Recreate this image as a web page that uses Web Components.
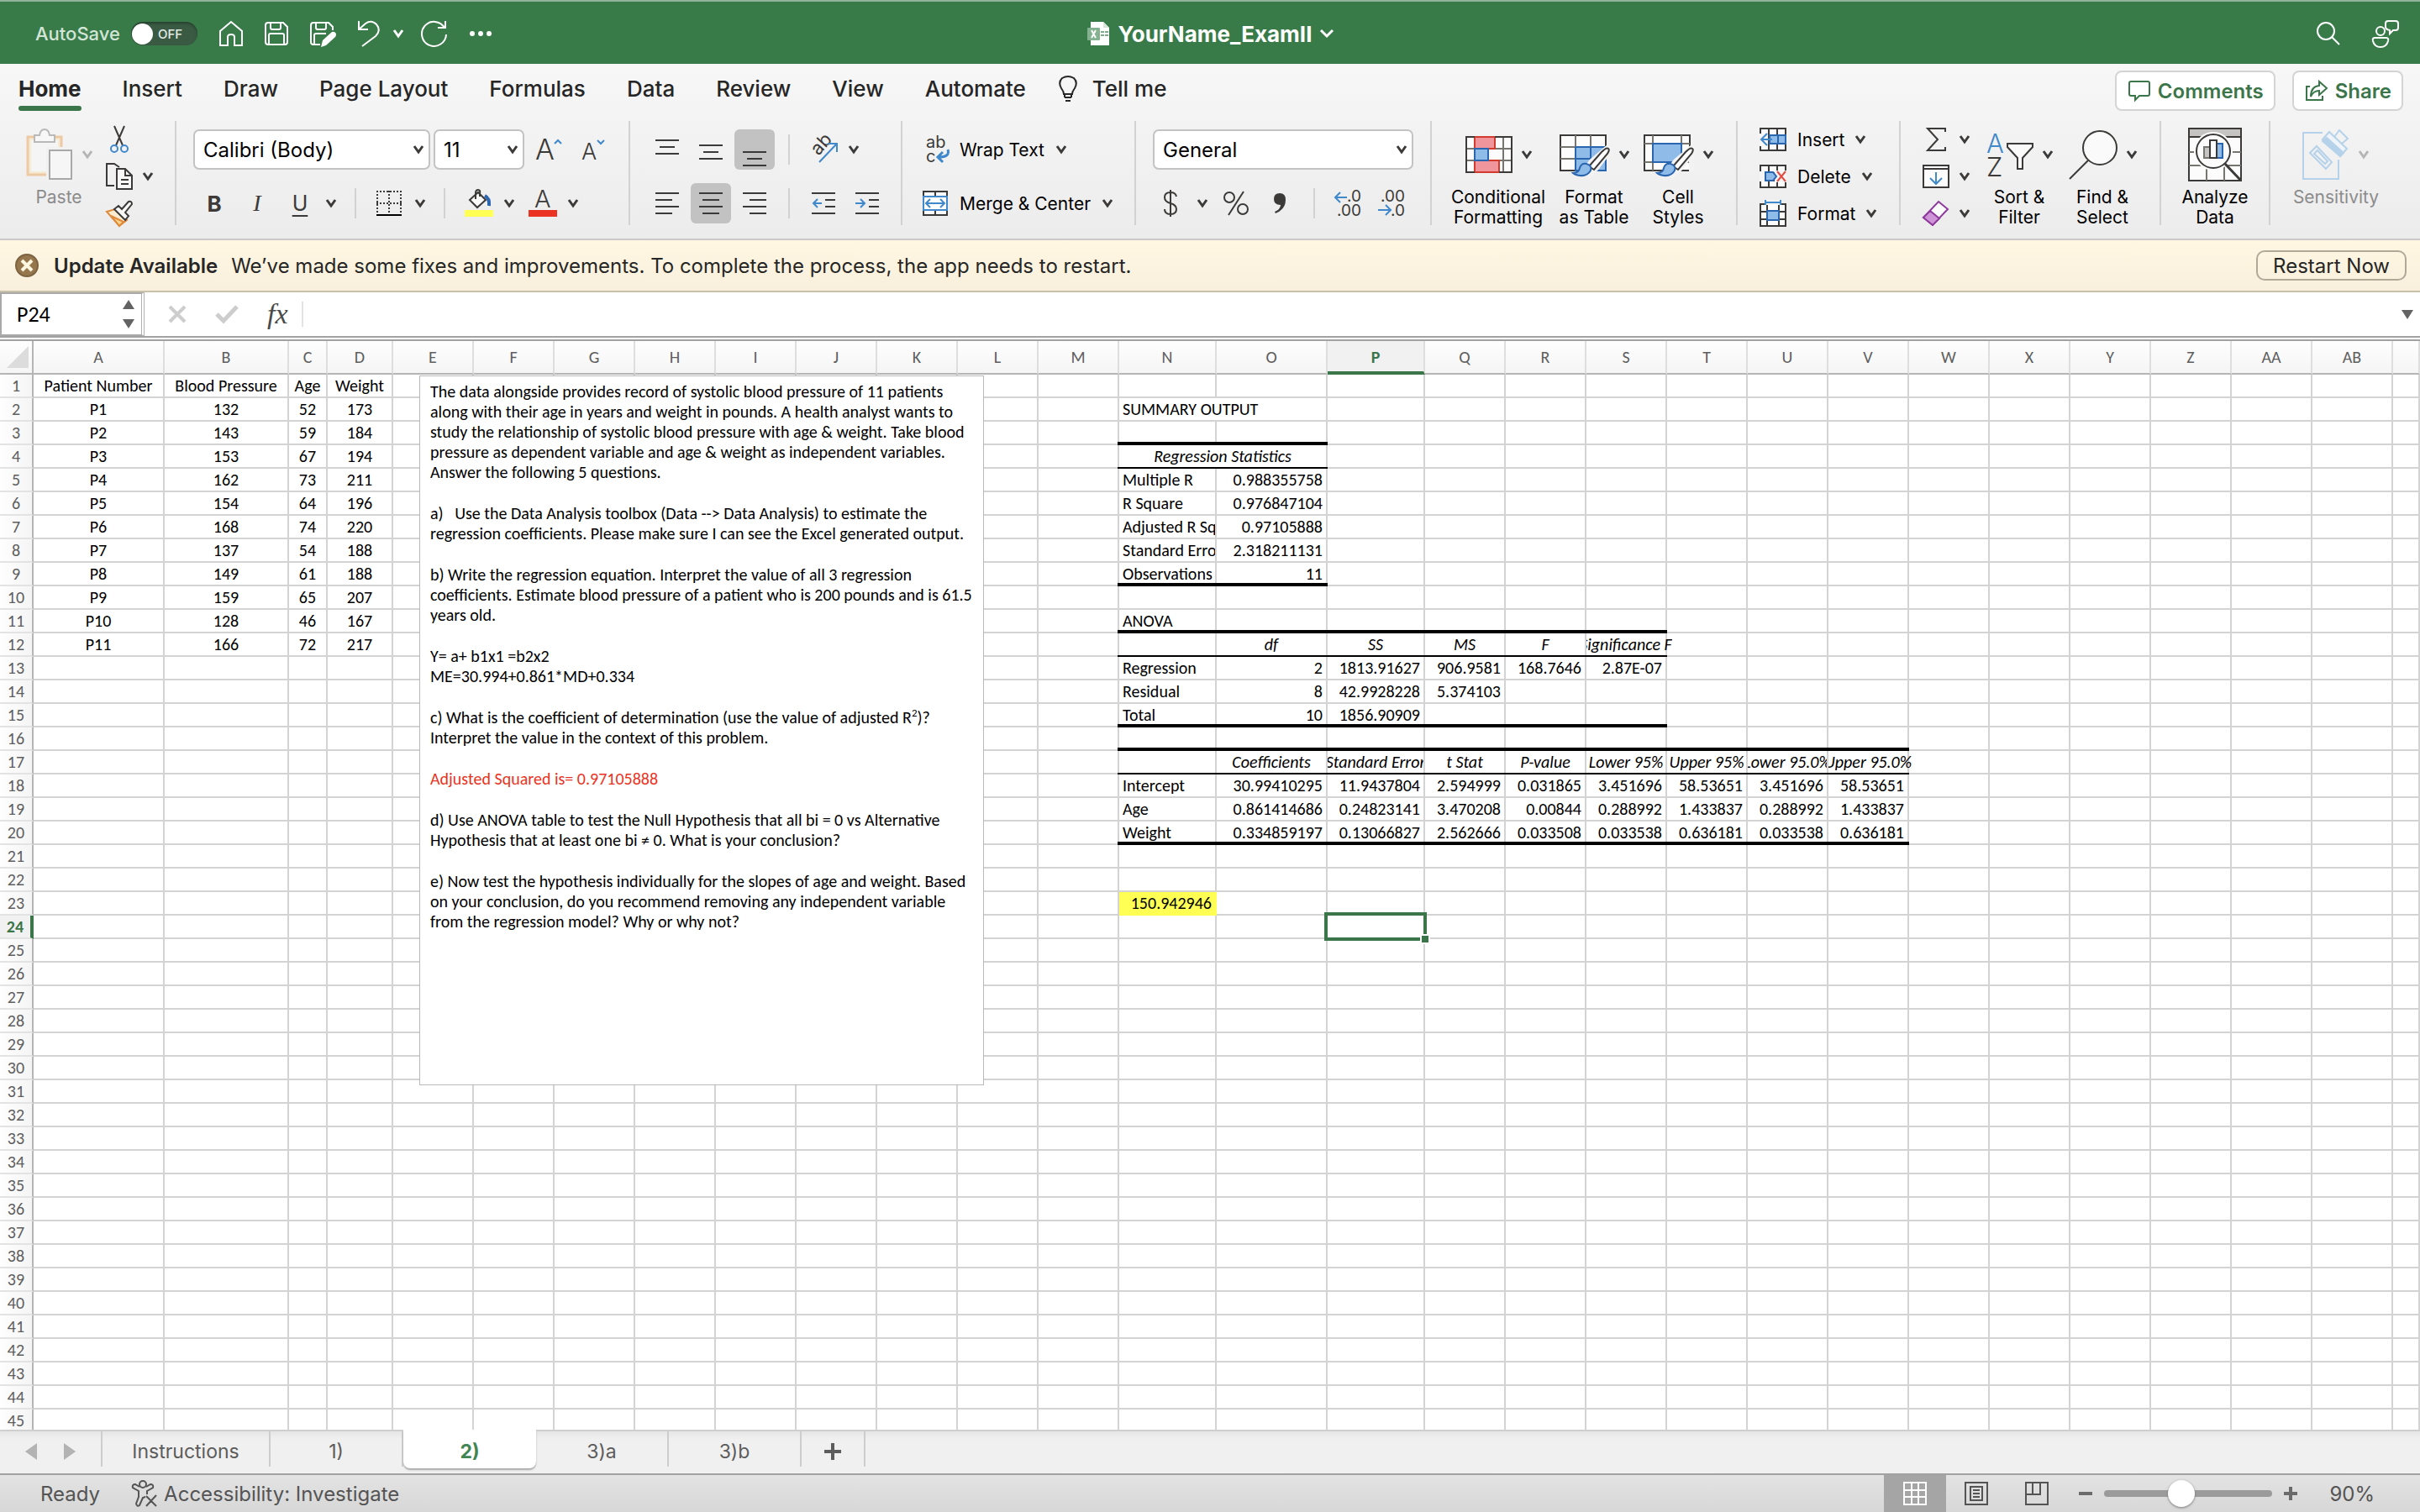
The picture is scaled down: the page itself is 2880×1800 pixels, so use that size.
<!DOCTYPE html>
<html lang="en">
<head>
<meta charset="utf-8">
<title>YourName_ExamII</title>
<style>
  html, body { height: 100%; margin: 0; }
  body { font-family: Inter, "Liberation Sans", sans-serif; font-size: 21px; color: #262626; background: #fff; overflow: hidden; }
  excel-app { --green: #387b49; --accent: #3b754a; --dark: #3b3a38; --blue: #3f88cb; --cell-font: Calibri, Carlito, Lato, sans-serif; }
</style>
</head>
<body>
<excel-app></excel-app>

<script>
// name: [width, height, markup]
const GRID = '<path d="M1 1H31V27H1ZM1 10H31M1 19H31M11 1V27M21 1V27" fill="#fbfbfb"/>';
const BRUSH = `<path d="M57 20Q60 20 59 24L44 44L35 53L30 47L38 36Z" fill="#f3f3f3" stroke="#f3f3f3" stroke-width="6"/>
  <path d="M58 21Q60 22 57 27L41 46L35 42L50 25Q56 19 58 21Z" fill="#fff"/>
  <path d="M16 50Q23 50 24 44Q26 38 32 39Q39 41 37 47Q33 54 24 53Q18 52 16 50Z" fill="#8fbbe8" stroke="#2a65b0"/>`;
const ICONS = {
  chev: [12, 10, '<path d="M1 1L6 8L11 1" stroke-width="3"/>'],
  chevWide: [16, 10, '<path d="M1 1L8 8L15 1" stroke-width="3"/>'],
  home: [28, 30, '<path d="M1 12L14 1L27 12V29H18V19Q18 16 14 16T10 19V29H1Z"/>'],
  save: [28, 28, '<path d="M4 1H22L27 6V24Q27 27 24 27H4Q1 27 1 24V4Q1 1 4 1ZM7 1V7Q7 9 9 9H17Q19 9 19 7V1M5 27V16Q5 14 7 14H21Q23 14 23 16V27"/>'],
  saveEdit: [30, 28, '<path d="M12 27H4Q1 27 1 24V4Q1 1 4 1H22L27 6V10M7 1V7Q7 9 9 9H17Q19 9 19 7V1M5 27V16Q5 14 7 14H19"/><path d="M13 30L15 22L26 12Q29 11 31 14Q31 17 30 18L19 28Z" fill="currentColor" stroke="none"/>'],
  undo: [27, 32, '<path d="M2 1V11H13M2 11L10 4Q17 -1 23 5Q29 12 22 19L6 31"/>'],
  redo: [32, 32, '<path d="M30 1V9H21M29 9A14.500 14.500 0 1 0 31 17"/>'],
  more: [28, 8, '<g fill="currentColor" stroke="none"><circle cx="4" cy="4" r="3"/><circle cx="14" cy="4" r="3"/><circle cx="24" cy="4" r="3"/></g>'],
  xlsDoc: [28, 30, '<path d="M5 1H20L27 8V29H5Z" fill="#fff" stroke="none"/><path d="M20 1V8H27Z" fill="#d8e5db" stroke="none"/><path d="M17 12h4v2h-4zm5 0h4v2h-4zm-5 4h4v2h-4zm5 0h4v2h-4z" fill="#7fa98a" stroke="none"/><rect x="1" y="8" width="15" height="15" rx="1" fill="#84b291" stroke="none"/><path d="M6 11L11 20M11 11L6 20" stroke="#fff"/>'],
  search: [30, 30, '<circle cx="12" cy="12" r="10"/><path d="M19 19L28 28"/>'],
  person: [34, 34, '<circle cx="11" cy="14" r="5"/><path d="M4 22H18Q21 22 20 26Q18 33 11 33T2 26Q1 22 4 22ZM20 2H29Q32 2 32 5V10Q32 13 29 13H26L22 17V13Q17 12 17 9V5Q17 2 20 2Z"/>'],
  bulb: [22, 31, '<path d="M6 22Q6 19 3 15Q-1 8 4 3Q11 -1 18 3Q23 8 19 15Q16 19 16 22ZM7 26H15M7 22V26M15 22V26M8 30H14"/>'],
  comment: [26, 26, '<path d="M3 2H23Q25 2 25 4V17Q25 19 23 19H13L8 24V19H3Q1 19 1 17V4Q1 2 3 2Z"/>'],
  share: [26, 26, '<path d="M1 8V24H20V19M1 16V8H5"/><path d="M16 2L25 10L16 18V13Q9 13 6 20Q6 8 16 7Z"/>'],
  paste: [56, 62, '<path d="M2 10H42V55H2Z" fill="#f5ead3" stroke="#edcaa3" stroke-width="3"/><path d="M6 14H38V51H6Z" fill="#f5f5f5" stroke="none"/><path d="M10 16V8H16Q17 1 22 1T28 8H34V16Z" fill="#f7f7f7" stroke="#b9b9b9" stroke-width="2"/><path d="M26 24H55V61H26Z" fill="#f3f3f3" stroke="#f1f1f1" stroke-width="4"/><path d="M28 26H54V60H28Z" fill="#f6f6f6" stroke="#a9a9a9" stroke-width="2"/>'],
  cut: [22, 34, '<path d="M5 1L15 24M17 1L7 24"/><circle cx="5" cy="28" r="4" stroke="#3f88cb"/><circle cx="17" cy="28" r="4" stroke="#3f88cb"/>'],
  copy: [32, 34, '<path d="M10 28H1V2H10L16 6"/><path d="M13 8H23L31 16V32H13Z" fill="#f7f7f7"/><path d="M23 8V16H31M18 21H27M18 26H27"/>'],
  painter: [32, 32, '<path d="M1 14L11 11L25 24L16 31Z" fill="#fcebcf" stroke="#e08a3c"/><path d="M6 19L21 26L16 31Z" fill="#f9d48a" stroke="#e08a3c"/><path d="M10 11L15 7L19 11L27 2Q31 1 31 5L23 15L27 19L23 24Z" fill="#f7f7f7"/>'],
  fontUp: [32, 30, '<text x="0" y="27" font-size="34" font-weight="300">A</text><path d="M23 8L27 4L31 8" stroke="#3f88cb"/>'],
  fontDown: [28, 30, '<text x="0" y="27" font-size="27" font-weight="300">A</text><path d="M19 4L23 8L27 4" stroke="#3f88cb"/>'],
  borders: [30, 30, '<path d="M0 1H30M0 15H30M1 0V27M15 0V27M29 0V27" stroke-dasharray="2 2"/><path d="M0 29H30" stroke="#000"/>'],
  fill: [34, 34, '<path d="M6 13L16 4L25 13L15 22Z M13 12V5Q13 1 16 1T18 5V9" fill="#fafafa"/><path d="M24 8Q30 11 29 20" stroke="#2a65b0" stroke-width="4"/><path d="M0 25H34V33H0Z" fill="#ffff54" stroke="none"/>'],
  fontColor: [34, 34, '<text x="7" y="22" font-size="29" font-weight="300">A</text><path d="M0 25H34V33H0Z" fill="#ea3323" stroke="none"/>'],
  vTop: [28, 36, '<path d="M0 7H28M5 15H23M0 23H28"/>'],
  vMid: [28, 36, '<path d="M0 13H28M5 21H23M0 29H28"/>'],
  vBottom: [28, 36, '<path d="M0 21H28M5 29H23M0 37H28"/>'],
  hLeft: [28, 28, '<path d="M0 2H28M0 10H20M0 18H28M0 26H20"/>'],
  hCenter: [28, 28, '<path d="M0 2H28M4 10H24M0 18H28M4 26H24"/>'],
  hRight: [28, 28, '<path d="M0 2H28M8 10H28M0 18H28M8 26H28"/>'],
  orient: [34, 34, '<text x="0" y="0" font-size="22" transform="translate(11 25) rotate(-48)">ab</text><path d="M12 32L32 11M22 10H33V20" stroke="#3f88cb"/>'],
  outdent: [28, 28, '<path d="M0 2H28M16 10H28M16 18H28M0 26H28"/><path d="M12 14H2M7 9L2 14L7 19" stroke="#3f88cb"/>'],
  indent: [28, 28, '<path d="M0 2H28M16 10H28M16 18H28M0 26H28"/><path d="M0 14H11M6 9L11 14L6 19" stroke="#3f88cb"/>'],
  wrap: [30, 34, '<text x="4" y="15" font-size="20">ab</text><text x="4" y="32" font-size="20">c</text><path d="M30 17Q33 26 19 26M24 20L18 26L24 32" stroke="#3f88cb" stroke-width="3"/>'],
  merge: [30, 32, '<path d="M1 2H29V30H1ZM15 2V8M15 24V30" fill="#fafafa"/><path d="M1 8H29V24H1Z" fill="#fff" stroke="#3f88cb"/><path d="M5 16H25M9 11L4 16L9 21M21 11L26 16L21 21" stroke="#3f88cb"/>'],
  dollar: [18, 34, '<path d="M9 1V33M16 9Q15 4 9 4Q2 4 2 10Q2 15 9 17Q16 19 16 24Q16 30 9 30Q2 30 2 24"/>'],
  percent: [30, 30, '<circle cx="7" cy="8" r="6"/><circle cx="23" cy="22" r="6"/><path d="M24 1L6 29"/>'],
  comma: [16, 26, '<path d="M8 1Q15 1 15 9Q15 20 3 25L2 23Q9 20 9 15Q1 15 1 8Q1 1 8 1Z" fill="currentColor" stroke="none"/>'],
  decInc: [32, 34, '<text x="32" y="15" font-size="19" text-anchor="end">.0</text><text x="32" y="32" font-size="19" text-anchor="end">.00</text><path d="M15 10H1M7 4L1 10L7 16" stroke="#3f88cb"/>'],
  decDec: [32, 34, '<text x="32" y="15" font-size="19" text-anchor="end">.00</text><text x="32" y="32" font-size="19" text-anchor="end">.0</text><path d="M0 25H15M9 19L15 25L9 31" stroke="#3f88cb"/>'],
  condFmt: [56, 46, '<path d="M1 2H55V44H1Z" fill="#fcfcfc"/><path d="M1 16H55M1 30H55M45 2V44M11 2V44" stroke="#77756f"/><path d="M11 2H35V16H11ZM11 30H40V44H11Z" fill="#f0959b" stroke="#d23a2e"/><path d="M11 16H27V30H11Z" fill="#8fbbe8" stroke="#2a65b0"/><path d="M1 2H11M1 2V44H11M35 2H55V44H40"/>'],
  fmtTable: [60, 56, '<path d="M1 5H55V47H1Z" fill="#fcfcfc"/><path d="M19 19H55V47H19Z" fill="#8fbbe8" stroke="none"/><path d="M1 19H19M1 33H19M19 5V19M37 5V19" stroke="#77756f"/><path d="M19 19H55M19 19V47H55V33M19 33H50M37 19V38" stroke="#2a65b0"/>' + BRUSH],
  cellStyles: [60, 56, '<path d="M1 5H55V47H1Z" fill="#fcfcfc"/><path d="M1 15H55M1 37H55M11 5V47M45 5V47" stroke="#77756f"/><path d="M11 15H45V37H11Z" fill="#8fbbe8" stroke="#2a65b0"/><path d="M54 20H60V48H54Z" fill="#f3f3f3" stroke="none"/>' + BRUSH],
  cellInsert: [32, 28, GRID + '<path d="M12 9H31V19H12Z" fill="#8fbbe8" stroke="#2a65b0"/><path d="M22 9V19" stroke="#2a65b0"/><path d="M0 7H10V22H0Z" fill="#f6f6f6" stroke="none"/><path d="M15 14H2M9 7L2 14L9 21" stroke="#3f88cb"/>'],
  cellDelete: [32, 28, GRID + '<path d="M0 8H6V20H0ZM18 7H32V21H18Z" fill="#f6f6f6" stroke="none"/><path d="M7 9H16L20 14L16 19H7Z" fill="#8fbbe8" stroke="#2a65b0"/><path d="M21 8L31 20M31 8L21 20" stroke="#e2493f"/>'],
  cellFormat: [32, 32, '<path d="M1 5H31V31H1ZM1 14H31M1 23H31M9 5V31M23 5V31" fill="#fbfbfb"/><path d="M9 13H23V24H9Z" fill="#8fbbe8" stroke="#2a65b0"/><path d="M6 0H26V6H6Z" fill="#f3f3f3" stroke="none"/><path d="M7 0V6M25 0V6M7 3H25" stroke="#3f88cb"/>'],
  sum: [24, 28, '<path d="M23 5V1H2L14 14L2 27H23V23"/>'],
  fillDown: [32, 28, '<path d="M1 1H31V27H1ZM1 5H31" fill="#fcfcfc"/><path d="M16 9V22M9 16L16 23L23 16" stroke="#3f88cb"/>'],
  eraser: [32, 32, '<path d="M19 2L30 11L12 30L1 21Z" fill="#fbfbfb" stroke="#8e3a9c"/><path d="M9 13L20 22L12 30L1 21Z" fill="#cf94d8" stroke="#8e3a9c"/>'],
  sortFilter: [56, 54, '<text x="0" y="25" font-size="31" font-weight="300" style="fill:#3f88cb">A</text><text x="0" y="53" font-size="31" font-weight="300">Z</text><path d="M25 14H55V18L43 31V44H37V31L25 18Z" fill="#fafafa"/>'],
  find: [58, 60, '<circle cx="37" cy="22" r="20" fill="#fafafa"/><path d="M23 37L1 59"/>'],
  analyze: [64, 64, '<path d="M1 1H63V63H1Z" fill="#fcfcfc"/><path d="M1 1H63V11H1Z" fill="#c5c4c2"/><path d="M1 29H63M1 45H63M22 45V63M43 45V63" stroke="#77756f"/><circle cx="30" cy="28" r="20" stroke="#fcfcfc" stroke-width="6"/><circle cx="30" cy="28" r="20" fill="#fcfcfc"/><path d="M19 23H26V36H19Z" fill="#c5c4c2" stroke="#77756f"/><path d="M34 19H41V36H34Z" fill="#8fbbe8" stroke="#2a65b0"/><path d="M26 15H34V36H26Z" fill="#fff"/><path d="M44 43L62 62" stroke-width="3"/>'],
  sensitivity: [56, 60, '<g stroke="#b5d2ea" fill="none"><path d="M24 4H1V59H43V36"/><path d="M9 28L17 20L35 39L28 47Z"/><path d="M14 29L18 25L30 38L27 41Z"/><path d="M24 12L32 3L53 23L45 32Z" fill="#eef4f9"/><path d="M24 14L29 10L49 28L45 32Z" fill="#b5d2ea"/><path d="M38 9L44 1L54 11L47 17"/></g>'],
  close: [28, 28, '<circle cx="14" cy="14" r="13" fill="#95764d" stroke="#7c6341"/><path d="M8 8L20 20M20 8L8 20" stroke="#fff8e0" stroke-width="4"/>'],
  cancel: [24, 24, '<path d="M3 3L21 21M21 3L3 21" stroke-width="4"/>'],
  confirm: [28, 24, '<path d="M2 12L10 20L26 3" stroke-width="5"/>'],
  triUp: [14, 11, '<path d="M7 0L14 11H0Z" fill="currentColor" stroke="none"/>'],
  triDown: [14, 11, '<path d="M7 11L14 0H0Z" fill="currentColor" stroke="none"/>'],
  triLeft: [14, 20, '<path d="M0 10L14 0V20Z" fill="currentColor" stroke="none"/>'],
  triRight: [14, 20, '<path d="M14 10L0 0V20Z" fill="currentColor" stroke="none"/>'],
  plus: [20, 20, '<path d="M10 0V20M0 10H20" stroke-width="4"/>'],
  zoomPlus: [16, 16, '<path d="M8 0V16M0 8H16" stroke-width="4"/>'],
  zoomMinus: [16, 16, '<path d="M0 8H16" stroke-width="4"/>'],
  access: [30, 32, '<circle cx="13" cy="5" r="4"/><path d="M9 8L4 5Q0 5 1 9L8 13V20L5 28Q6 32 9 30L13 21L16 20M17 8L22 5Q26 5 25 9L18 13V17M17 19L29 31M29 18L17 31"/>'],
  viewNormal: [28, 28, '<path d="M1 1H27V27H1ZM1 10H27M1 18H27M10 1V27M18 1V27" stroke-width="2"/>'],
  viewPage: [28, 28, '<path d="M1 1H27V27H1ZM7 6H21V22H7ZM10 10H18M10 14H18M10 18H18"/>'],
  viewBreak: [28, 28, '<path d="M1 1H27V27H1ZM9 1V15M18 1V15H1"/>']
};

class XIcon extends HTMLElement {
  connectedCallback() {
    const [w, h, body] = ICONS[this.getAttribute('name')];
    this.attachShadow({ mode: 'open' });
    this.shadowRoot.innerHTML = `
      <style>
        :host { display: inline-flex; flex: none; }
        svg { display: block; overflow: visible; fill: none; stroke: currentColor; stroke-width: 2; }
        text { fill: currentColor; stroke: none; }
      </style>
      <svg width="${w}" height="${h}" viewBox="0 0 ${w} ${h}" aria-hidden="true">${body}</svg>
    `;
  }
}
customElements.define('x-icon', XIcon);

const icon = name => `<x-icon name="${name}"></x-icon>`;
const chev = label => `<button aria-label="${label} options">${icon('chev')}</button>`;
const RESET = `
  button { font: inherit; color: inherit; background: none; border: 0; padding: 0; margin: 0; display: inline-flex; align-items: center; justify-content: center; white-space: nowrap; }
`;

class TitleBar extends HTMLElement {
  connectedCallback() {
    this.attachShadow({ mode: 'open' });
    this.shadowRoot.innerHTML = `
      <style>
        ${RESET}
        :host { display: grid; grid-template-columns: 1fr auto 1fr; align-items: center; padding: 2px 24px 0; border-top: 2px solid #8fb499; box-sizing: border-box; height: 76px; background: var(--green); color: #fff; }
        .left, .right, .doc { display: flex; align-items: center; }
        .left { gap: 26px; padding-left: 18px; }
        .right { justify-content: flex-end; gap: 36px; }
        .autosave { display: flex; align-items: center; gap: 13px; color: #d3e5d7; font-weight: 500; font-size: 22px; }
        .toggle { appearance: none; margin: 0; display: flex; align-items: center; width: 79px; height: 28px; border-radius: 14px; background: #3a5a44; box-shadow: inset 0 2px 3px #26422e; }
        .toggle::before { content: ""; width: 25px; height: 25px; margin-left: 1px; border-radius: 50%; background: #fff; }
        .toggle::after { content: "OFF"; margin-left: 6px; font: 500 15px Inter, sans-serif; color: #e4ece6; }
        .undo { display: flex; gap: 16px; align-items: center; margin-right: -6px; }
        .doc { gap: 10px; font-weight: 700; font-size: 26px; }
        h1 { font: inherit; margin: 0; }
      </style>
      <div class="left">
        <label class="autosave">AutoSave <input class="toggle" type="checkbox" role="switch"></label>
        <button aria-label="Home">${icon('home')}</button>
        <button aria-label="Save">${icon('save')}</button>
        <button aria-label="Save as">${icon('saveEdit')}</button>
        <span class="undo"><button aria-label="Undo">${icon('undo')}</button>${chev('Undo')}</span>
        <button aria-label="Redo">${icon('redo')}</button>
        <button aria-label="More">${icon('more')}</button>
      </div>
      <div class="doc">${icon('xlsDoc')}<h1>YourName_ExamII</h1><button aria-label="File menu">${icon('chevWide')}</button></div>
      <div class="right">
        <button aria-label="Search">${icon('search')}</button>
        <button aria-label="Presence">${icon('person')}</button>
      </div>
    `;
  }
}
customElements.define('title-bar', TitleBar);

class RibbonTabs extends HTMLElement {
  connectedCallback() {
    const tabs = ['Home', 'Insert', 'Draw', 'Page Layout', 'Formulas', 'Data', 'Review', 'View', 'Automate'];
    this.attachShadow({ mode: 'open' });
    this.shadowRoot.innerHTML = `
      <style>
        ${RESET}
        :host { display: flex; justify-content: space-between; height: 68px; padding: 0 20px 0 22px; }
        nav { display: flex; gap: 49px; height: 56px; font-size: 26px; font-weight: 500; }
        nav button { border-bottom: 6px solid transparent; padding-top: 8px; }
        nav .on { font-weight: 700; position: relative; }
        nav .on::after { content: ""; position: absolute; left: 0; right: 0; bottom: -6px; height: 6px; border-radius: 3px; background: var(--accent); }
        .tell { gap: 18px; margin-left: -10px; }
        .actions { display: flex; gap: 20px; padding-top: 8px; }
        .actions button { height: 48px; box-sizing: border-box; padding: 0 12px 0 14px; gap: 9px; border: 2px solid #d4d4d4; border-radius: 8px; background: #fff; color: var(--accent); font-weight: 600; font-size: 24px; }
      </style>
      <nav>
        ${tabs.map((t, i) => `<button class="${i ? '' : 'on'}">${t}</button>`).join('')}
        <button class="tell">${icon('bulb')}Tell me</button>
      </nav>
      <div class="actions">
        <button>${icon('comment')}Comments</button>
        <button>${icon('share')}Share</button>
      </div>
    `;
  }
}
customElements.define('ribbon-tabs', RibbonTabs);

// Icon over a one or two line label
class BigTool extends HTMLElement {
  connectedCallback() {
    const menu = this.hasAttribute('menu');
    this.attachShadow({ mode: 'open' });
    this.shadowRoot.innerHTML = `
      <style>
        ${RESET}
        :host { display: flex; justify-content: center; align-items: flex-start; }
        button { flex-direction: column; color: #000; line-height: 24px; }
        .art { display: flex; align-items: center; gap: 11px; height: 79px; color: var(--dark); }
        :host([disabled]) button { color: #8b8b8b; }
        :host([disabled]) .art { color: #b5b5b5; }
      </style>
      <button ${this.hasAttribute('disabled') ? 'disabled' : ''}>
        <span class="art">${icon(this.getAttribute('icon'))}${menu ? icon('chev') : ''}</span>
        <slot></slot>
      </button>
    `;
  }
}
customElements.define('big-tool', BigTool);

class RibbonSelect extends HTMLElement {
  connectedCallback() {
    this.attachShadow({ mode: 'open' });
    this.shadowRoot.innerHTML = `
      <style>
        :host { display: grid; align-items: center; }
        select, x-icon { grid-area: 1 / 1; }
        select { appearance: none; width: 100%; height: 48px; box-sizing: border-box; margin: 0; padding: 0 10px; border: 2px solid #c3c3c3; border-radius: 7px; background: #fff; color: #000; font: 24px Inter, sans-serif; }
        x-icon { justify-self: end; margin-right: 8px; color: var(--dark); pointer-events: none; }
      </style>
      <select aria-label="${this.getAttribute('label')}"><option>${this.getAttribute('value')}</option></select>
      ${icon('chev')}
    `;
  }
}
customElements.define('ribbon-select', RibbonSelect);

class HomeRibbon extends HTMLElement {
  connectedCallback() {
    const tool = (name, label, cls = '') => `<button class="${cls}" aria-label="${label}">${icon(name)}</button>`;
    const wide = (name, label) => `<button class="wide">${icon(name)}<span>${label}</span>${icon('chev')}</button>`;
    const sep = '<i class="sep"></i>';
    this.attachShadow({ mode: 'open' });
    this.shadowRoot.innerHTML = `
      <style>
        ${RESET}
        :host { display: flex; height: 124px; padding-bottom: 16px; color: var(--dark); }
        section { flex: none; box-sizing: border-box; border-right: 2px solid #d2d2d2; display: flex; }
        section:last-child { border: 0; }
        .rows { display: grid; grid-template-rows: 48px 48px; row-gap: 16px; padding-top: 10px; }
        .row { display: grid; align-items: center; justify-items: center; }
        .row > ribbon-select { justify-self: stretch; }
        .row > button { width: 100%; height: 48px; }
        .row > .box { width: 48px; }
        .pressed { background: #c2c2c2; border-radius: 6px; }
        .sep { width: 2px; height: 36px; background: #d2d2d2; }
        .three { display: grid; grid-template-rows: repeat(3, 44px); align-items: center; }
        .three .row { grid-template-columns: 48px 20px; }
        .three .row > button { height: 44px; }
        .wide { color: #000; gap: 13px; justify-content: flex-start; }
        .wide x-icon { color: var(--dark); }
        .b { font-size: 26px; font-weight: 700; }
        .i { font: italic 28px "Liberation Serif", serif; }
        .u { font-size: 25px; text-decoration: underline; text-underline-offset: 5px; text-decoration-thickness: 2px; }

        .clipboard { width: 210px; padding-left: 24px; }
        .clipboard big-tool { width: 92px; margin-right: 2px; }
        .font { width: 540px; padding-left: 20px; }
        .font .row:first-child { grid-template-columns: 282px 112px 58px 48px; }
        .font .row:first-child ribbon-select + ribbon-select { margin-left: 4px; }
        .font .row:last-child { grid-template-columns: 50px 52px 50px 24px 34px 46px 28px 30px 52px 20px 60px 12px; }
        .align { width: 324px; padding-left: 18px; }
        .align .row { grid-template-columns: 52px 52px 52px 30px 52px 20px; }
        .align .row:last-child { grid-template-columns: 52px 52px 52px 30px 52px 52px; }
        .wrap { width: 278px; padding-left: 24px; }
        .wrap .wide { gap: 14px; }
        .number { width: 352px; padding-left: 20px; }
        .number .row:first-child { grid-template-columns: 310px; }
        .number .row:last-child { grid-template-columns: 42px 34px 46px 58px 24px 56px 48px; }
        .styles { width: 364px; padding-left: 16px; }
        .styles > :nth-child(1) { width: 126px; }
        .styles > :nth-child(2) { width: 102px; }
        .styles > :nth-child(3) { width: 98px; }
        .cells { width: 194px; padding-left: 26px; }
        .editing { width: 310px; padding-left: 18px; }
        .editing > :nth-child(2) { width: 110px; }
        .editing > :nth-child(3) { width: 88px; }
        .analyze { width: 130px; justify-content: center; }
        .sens { padding-left: 20px; }
        .sens big-tool { width: 116px; }
      </style>
      <section class="clipboard">
        <big-tool icon="paste" menu disabled>Paste</big-tool>
        <div class="three">
          <div class="row">${tool('cut', 'Cut')}</div>
          <div class="row">${tool('copy', 'Copy')}${chev('Copy')}</div>
          <div class="row">${tool('painter', 'Format painter')}</div>
        </div>
      </section>
      <section class="font"><div class="rows">
        <div class="row">
          <ribbon-select label="Font" value="Calibri (Body)"></ribbon-select>
          <ribbon-select label="Font size" value="11"></ribbon-select>
          ${tool('fontUp', 'Increase font size')}${tool('fontDown', 'Decrease font size')}
        </div>
        <div class="row">
          <button class="b">B</button><button class="i">I</button><button class="u">U</button>${chev('Underline')}
          ${sep}${tool('borders', 'Borders')}${chev('Borders')}
          ${sep}${tool('fill', 'Fill color')}${chev('Fill color')}${tool('fontColor', 'Font color')}${chev('Font color')}
        </div>
      </div></section>
      <section class="align"><div class="rows">
        <div class="row">
          ${tool('vTop', 'Top align', 'box')}${tool('vMid', 'Middle align', 'box')}${tool('vBottom', 'Bottom align', 'box pressed')}
          ${sep}${tool('orient', 'Orientation')}${chev('Orientation')}
        </div>
        <div class="row">
          ${tool('hLeft', 'Align left', 'box')}${tool('hCenter', 'Center', 'box pressed')}${tool('hRight', 'Align right', 'box')}
          ${sep}${tool('outdent', 'Decrease indent')}${tool('indent', 'Increase indent')}
        </div>
      </div></section>
      <section class="wrap"><div class="rows">
        ${wide('wrap', 'Wrap Text')}
        ${wide('merge', 'Merge &amp; Center')}
      </div></section>
      <section class="number"><div class="rows">
        <div class="row"><ribbon-select label="Number format" value="General"></ribbon-select></div>
        <div class="row">
          ${tool('dollar', 'Currency')}${chev('Currency')}${tool('percent', 'Percent')}${tool('comma', 'Comma style')}
          ${sep}${tool('decInc', 'Increase decimal')}${tool('decDec', 'Decrease decimal')}
        </div>
      </div></section>
      <section class="styles">
        <big-tool icon="condFmt" menu>Conditional<br>Formatting</big-tool>
        <big-tool icon="fmtTable" menu>Format<br>as Table</big-tool>
        <big-tool icon="cellStyles" menu>Cell<br>Styles</big-tool>
      </section>
      <section class="cells"><div class="three">
        ${wide('cellInsert', 'Insert')}
        ${wide('cellDelete', 'Delete')}
        ${wide('cellFormat', 'Format')}
      </div></section>
      <section class="editing">
        <div class="three">
          <div class="row">${tool('sum', 'AutoSum')}${chev('AutoSum')}</div>
          <div class="row">${tool('fillDown', 'Fill')}${chev('Fill')}</div>
          <div class="row">${tool('eraser', 'Clear')}${chev('Clear')}</div>
        </div>
        <big-tool icon="sortFilter" menu>Sort &amp;<br>Filter</big-tool>
        <big-tool icon="find" menu>Find &amp;<br>Select</big-tool>
      </section>
      <section class="analyze"><big-tool icon="analyze">Analyze<br>Data</big-tool></section>
      <section class="sens"><big-tool icon="sensitivity" menu disabled>Sensitivity</big-tool></section>
    `;
  }
}
customElements.define('home-ribbon', HomeRibbon);

class UpdateBar extends HTMLElement {
  connectedCallback() {
    this.attachShadow({ mode: 'open' });
    this.shadowRoot.innerHTML = `
      <style>
        ${RESET}
        :host { display: flex; align-items: center; height: 60px; padding: 0 16px 0 18px; border-top: 2px solid #c9c9c9; border-bottom: 2px solid #c9c0a8; background: linear-gradient(#fff7e2, #f8f0dc); font-size: 24px; }
        strong { font-weight: 600; margin: 0 16px 0 18px; }
        slot { display: block; }
        .restart { margin-left: auto; height: 36px; box-sizing: border-box; padding: 0 18px; border: 2px solid #b0a998; border-radius: 10px; }
      </style>
      <button aria-label="Dismiss">${icon('close')}</button>
      <strong>Update Available</strong>
      <slot></slot>
      <button class="restart">Restart Now</button>
    `;
  }
}
customElements.define('update-bar', UpdateBar);

class FormulaBar extends HTMLElement {
  connectedCallback() {
    this.attachShadow({ mode: 'open' });
    this.shadowRoot.innerHTML = `
      <style>
        ${RESET}
        :host { display: flex; align-items: center; height: 52px; background: #fff; border-bottom: 6px double #a2a2a2; }
        .name { display: flex; align-items: center; align-self: stretch; box-sizing: border-box; width: 172px; border: 2px solid #a9a9a9; border-right: 4px double #b0b0b0; padding: 0 8px 0 18px; }
        input { font: 26px var(--cell-font); border: 0; outline: 0; padding: 0; background: none; color: #000; min-width: 0; flex: 1; }
        .step { display: flex; flex-direction: column; gap: 12px; color: #636363; }
        .grey { color: #cdcdcd; }
        .cancel { margin-left: 27px; }
        .confirm { margin-left: 33px; }
        .fx { margin-left: 34px; font: italic 34px "Liberation Serif", serif; color: #4a4a4a; }
        .formula { margin-left: 16px; border-left: 2px solid #e3e3e3; height: 30px; }
        .more { margin: 0 8px; color: #636363; }
      </style>
      <div class="name">
        <input aria-label="Name box" value="P24">
        <span class="step"><button aria-label="Previous">${icon('triUp')}</button><button aria-label="Next">${icon('triDown')}</button></span>
      </div>
      <button class="grey cancel" aria-label="Cancel">${icon('cancel')}</button>
      <button class="grey confirm" aria-label="Enter">${icon('confirm')}</button>
      <button class="fx">fx</button>
      <input class="formula" aria-label="Formula">
      <button class="more" aria-label="Expand">${icon('triDown')}</button>
    `;
  }
}
customElements.define('formula-bar', FormulaBar);

const COLS = {
  A: 156, B: 148, C: 46, D: 78, E: 96, F: 96, G: 96, H: 96, I: 96, J: 96, K: 96, L: 96, M: 96,
  N: 116, O: 132, P: 116, Q: 96, R: 96, S: 96, T: 96, U: 96, V: 96, W: 96, X: 96, Y: 96, Z: 96, AA: 96, AB: 96, '': 0
};
const ROWS = 45;
const CELLS = {};
// c: centred, l: left, r: right, h: italic heading
const put = (row, start, kind, values) => {
  const names = Object.keys(COLS);
  values.forEach((v, i) => { if (v !== '') CELLS[names[names.indexOf(start) + i] + row] = { v, kind }; });
};
[
  ['Patient Number', 'Blood Pressure', 'Age', 'Weight'],
  ['P1', 132, 52, 173], ['P2', 143, 59, 184], ['P3', 153, 67, 194], ['P4', 162, 73, 211],
  ['P5', 154, 64, 196], ['P6', 168, 74, 220], ['P7', 137, 54, 188], ['P8', 149, 61, 188],
  ['P9', 159, 65, 207], ['P10', 128, 46, 167], ['P11', 166, 72, 217]
].forEach((r, i) => put(i + 1, 'A', 'c', r));

put(2, 'N', 'l', ['SUMMARY OUTPUT']);
put(4, 'N', 'h', ['Regression Statistics']);
CELLS.N2.span = CELLS.N4.span = 2;
[['Multiple R', '0.988355758'], ['R Square', '0.976847104'], ['Adjusted R Square', '0.97105888'], ['Standard Error', '2.318211131'], ['Observations', '11']]
  .forEach(([k, v], i) => { put(5 + i, 'N', 'l', [k]); put(5 + i, 'O', 'r', [v]); });

put(11, 'N', 'l', ['ANOVA']);
put(12, 'O', 'h', ['df', 'SS', 'MS', 'F', 'Significance F']);
[['Regression', '2', '1813.91627', '906.9581', '168.7646', '2.87E-07'], ['Residual', '8', '42.9928228', '5.374103'], ['Total', '10', '1856.90909']]
  .forEach(([k, ...v], i) => { put(13 + i, 'N', 'l', [k]); put(13 + i, 'O', 'r', v); });

put(17, 'O', 'h', ['Coefficients', 'Standard Error', 't Stat', 'P-value', 'Lower 95%', 'Upper 95%', 'Lower 95.0%', 'Upper 95.0%']);
[
  ['Intercept', '30.99410295', '11.9437804', '2.594999', '0.031865', '3.451696', '58.53651', '3.451696', '58.53651'],
  ['Age', '0.861414686', '0.24823141', '3.470208', '0.00844', '0.288992', '1.433837', '0.288992', '1.433837'],
  ['Weight', '0.334859197', '0.13066827', '2.562666', '0.033508', '0.033538', '0.636181', '0.033538', '0.636181']
].forEach(([k, ...v], i) => { put(18 + i, 'N', 'l', [k]); put(18 + i, 'O', 'r', v); });
put(23, 'N', 'r', ['150.942946']);

// Bottom rules under the output tables, by row: [first, last, class]
const RULES = {
  3: ['N', 'O', 'thick'], 4: ['N', 'O', 'thin'], 9: ['N', 'O', 'thick'],
  11: ['N', 'S', 'thick'], 12: ['N', 'S', 'thin'], 15: ['N', 'S', 'thick'],
  16: ['N', 'V', 'thick'], 17: ['N', 'V', 'thin'], 20: ['N', 'V', 'thick']
};

class SheetGrid extends HTMLElement {
  connectedCallback() {
    const names = Object.keys(COLS);
    const at = n => names.indexOf(n);
    let body = '';
    for (let r = 1; r <= ROWS; r++) {
      body += `<tr><th scope="row" class="${r === 24 ? 'on' : ''}">${r}</th>`;
      for (let c = 0; c < names.length; c++) {
        const ref = names[c] + r;
        const cell = CELLS[ref];
        const cls = [];
        const rule = RULES[r];
        if (rule && c >= at(rule[0]) && c <= at(rule[1])) cls.push(rule[2]);
        if (cell) cls.push(cell.kind);
        if (ref === 'N23') cls.push('yellow');
        if (ref === 'P24') cls.push('active');
        if (ref === 'S12' || ref === 'V17') cls.push('spill');
        const span = cell && cell.span ? ` colspan="${cell.span}"` : '';
        body += `<td${cls.length ? ` class="${cls.join(' ')}"` : ''}${span}>${cell ? `<div>${cell.v}</div>` : ''}${ref === 'P24' ? '<span class="ring"></span>' : ''}</td>`;
        if (cell && cell.span) c += cell.span - 1;
      }
      body += '</tr>';
    }
    this.attachShadow({ mode: 'open' });
    this.shadowRoot.innerHTML = `
      <style>
        :host { display: block; position: relative; overflow: hidden; font: 20px/24px var(--cell-font); color: #000; }
        table { table-layout: fixed; width: 100%; border-collapse: separate; border-spacing: 0; }
        th { font-weight: 400; padding: 0; box-sizing: border-box; color: #5e5e5e; }
        thead th { height: 40px; border-right: 2px solid #dedede; border-bottom: 2px solid #b5b5b5; background: linear-gradient(#fefefe, #f5f5f5); }
        thead th.on { background: #f1f1f1; color: var(--accent); font-weight: 700; border-bottom: 4px solid var(--accent); padding-top: 2px; }
        thead .corner { border-right-color: #b5b5b5; }
        .corner::after { content: ""; display: block; margin: 0 4px 0 8px; height: 26px; background: #dcdcdc; clip-path: polygon(100% 0, 100% 100%, 0 100%); }
        tbody th { height: 28px; border-right: 2px solid #b5b5b5; border-bottom: 2px solid #e3e3e3; background: linear-gradient(90deg, #fefefe, #f5f5f5); }
        tbody th.on { background: #f1f1f1; color: var(--accent); font-weight: 700; border-right: 4px solid var(--accent); }
        td { height: 28px; box-sizing: border-box; padding: 0; border-right: 2px solid #d3d3d3; border-bottom: 2px solid #d3d3d3; }
        td div { display: flex; height: 26px; line-height: 26px; padding: 0 4px; overflow: hidden; white-space: nowrap; }
        .c div, .h div { justify-content: center; padding: 0; }
        .r div { justify-content: flex-end; }
        .h { font-style: italic; }
        /* rules run over the grid lines on both sides */
        .thin, .thick { position: relative; }
        .thin::after, .thick::after { content: ""; position: absolute; left: -2px; right: -2px; bottom: -2px; height: 2px; background: #000; }
        .thick::after { height: 4px; }
        .spill div { overflow: visible; clip-path: inset(0 -8px 0 0); }
        .yellow { background: #ffff54; border-color: #ffff54; }
        .active { position: relative; }
        .ring { position: absolute; inset: -4px; border: 4px solid var(--accent); z-index: 1; }
        .ring::after { content: ""; position: absolute; right: -8px; bottom: -8px; width: 8px; height: 8px; border: 2px solid #fff; background: var(--accent); }
      </style>
      <table>
        <colgroup><col style="width:40px">${names.map(n => COLS[n] ? `<col style="width:${COLS[n]}px">` : '<col>').join('')}</colgroup>
        <thead><tr><th class="corner"></th>${names.map(n => `<th scope="col" class="${n === 'P' ? 'on' : ''}">${n}</th>`).join('')}</tr></thead>
        <tbody>${body}</tbody>
      </table>
      <slot></slot>
    `;
  }
}
customElements.define('sheet-grid', SheetGrid);

// Floating text box that sits over the cells
class TextBox extends HTMLElement {
  connectedCallback() {
    this.attachShadow({ mode: 'open' });
    this.shadowRoot.innerHTML = `
      <style>
        :host { position: absolute; left: 499px; top: 41px; width: 672px; height: 845px; box-sizing: border-box; border: 1px solid #b9b9b9; background: #fff; padding: 6px 12px; white-space: nowrap; color: #000; font: 20px/24px var(--cell-font); }
        ::slotted(p) { margin: 0 0 25px; }
        ::slotted(.red) { color: #ea3323; }
      </style>
      <slot></slot>
    `;
  }
}
customElements.define('text-box', TextBox);

class SheetTabs extends HTMLElement {
  connectedCallback() {
    this.attachShadow({ mode: 'open' });
    this.shadowRoot.innerHTML = `
      <style>
        ${RESET}
        :host { display: flex; height: 50px; border-top: 2px solid #cfcfcf; border-bottom: 2px solid #a2a2a2; background: linear-gradient(#e6e6e6, #f0f0f0 10px); color: #5c5c5c; font-size: 23px; position: relative; }
        .move { display: flex; justify-content: center; gap: 32px; width: 122px; height: 42px; box-sizing: border-box; border-right: 2px solid #cdcdcd; color: #b3b3b3; padding-top: 6px; }
        .tab { width: 158px; height: 42px; box-sizing: border-box; border-right: 2px solid #cdcdcd; padding-top: 6px; }
        .first { width: 200px; }
        .on { height: 46px; margin-top: -2px; border: 0; border-radius: 0 0 8px 8px; background: #fff; color: #3f8653; font-weight: 700; box-shadow: 0 2px 2px #a8a8a8; }
        .add { width: 76px; }
      </style>
      <div class="move"><button aria-label="Previous sheet">${icon('triLeft')}</button><button aria-label="Next sheet">${icon('triRight')}</button></div>
      <button class="tab first">Instructions</button>
      <button class="tab">1)</button>
      <button class="tab on">2)</button>
      <button class="tab">3)a</button>
      <button class="tab">3)b</button>
      <button class="tab add" aria-label="Add sheet">${icon('plus')}</button>
    `;
  }
}
customElements.define('sheet-tabs', SheetTabs);

class StatusBar extends HTMLElement {
  connectedCallback() {
    this.attachShadow({ mode: 'open' });
    this.shadowRoot.innerHTML = `
      <style>
        ${RESET}
        :host { display: flex; align-items: center; height: 44px; padding: 0 54px 0 48px; background: linear-gradient(#e3e3e3, #d7d7d7); color: #545454; font-size: 24px; }
        .acc { margin-left: 38px; gap: 8px; }
        .views { display: flex; height: 44px; margin-left: auto; }
        .views button { width: 72px; }
        .views .on { width: 74px; background: #a5a5a5; color: #fff; }
        .zoom { display: flex; align-items: center; gap: 14px; margin-left: 14px; color: #6b6b6b; }
        input { appearance: none; width: 200px; height: 32px; margin: 0; background: none; }
        input::-webkit-slider-runnable-track { height: 8px; border-radius: 4px; background: #9b9b9b; }
        input::-webkit-slider-thumb { appearance: none; width: 32px; height: 32px; margin-top: -12px; border-radius: 50%; background: #fff; box-shadow: 0 1px 3px #777; }
        output { margin-left: 38px; }
      </style>
      <span>Ready</span>
      <button class="acc">${icon('access')}Accessibility: Investigate</button>
      <div class="views">
        <button class="on" aria-label="Normal view">${icon('viewNormal')}</button>
        <button aria-label="Page layout view">${icon('viewPage')}</button>
        <button aria-label="Page break view">${icon('viewBreak')}</button>
      </div>
      <div class="zoom">
        <button aria-label="Zoom out">${icon('zoomMinus')}</button>
        <input type="range" aria-label="Zoom" min="0" max="100" value="45">
        <button aria-label="Zoom in">${icon('zoomPlus')}</button>
      </div>
      <output>90%</output>
    `;
  }
}
customElements.define('status-bar', StatusBar);

class ExcelApp extends HTMLElement {
  connectedCallback() {
    this.attachShadow({ mode: 'open' });
    this.shadowRoot.innerHTML = `
      <style>
        :host { display: flex; flex-direction: column; height: 100vh; }
        .ribbon { background: linear-gradient(#f7f7f7, #ececec); }
        sheet-grid { flex: 1; min-height: 0; }
        sup { font-size: 13px; line-height: 0; }
      </style>
      <title-bar></title-bar>
      <div class="ribbon"><ribbon-tabs></ribbon-tabs><home-ribbon></home-ribbon></div>
      <update-bar>We’ve made some fixes and improvements. To complete the process, the app needs to restart.</update-bar>
      <formula-bar></formula-bar>
      <sheet-grid>
        <text-box>
          <p>The data alongside provides record of systolic blood pressure of 11 patients<br>along with their age in years and weight in pounds. A health analyst wants to<br>study the relationship of systolic blood pressure with age &amp; weight. Take blood<br>pressure as dependent variable and age &amp; weight as independent variables.<br>Answer the following 5 questions.</p>
          <p>a)&nbsp;&nbsp; Use the Data Analysis toolbox (Data --&gt; Data Analysis) to estimate the<br>regression coefficients. Please make sure I can see the Excel generated output.</p>
          <p>b) Write the regression equation. Interpret the value of all 3 regression<br>coefficients. Estimate blood pressure of a patient who is 200 pounds and is 61.5<br>years old.</p>
          <p>Y= a+ b1x1 =b2x2<br>ME=30.994+0.861*MD+0.334</p>
          <p>c) What is the coefficient of determination (use the value of adjusted R<sup>2</sup>)?<br>Interpret the value in the context of this problem.</p>
          <p class="red">Adjusted Squared is= 0.97105888</p>
          <p>d) Use ANOVA table to test the Null Hypothesis that all bi = 0 vs Alternative<br>Hypothesis that at least one bi ≠ 0. What is your conclusion?</p>
          <p>e) Now test the hypothesis individually for the slopes of age and weight. Based<br>on your conclusion, do you recommend removing any independent variable<br>from the regression model? Why or why not?</p>
        </text-box>
      </sheet-grid>
      <sheet-tabs></sheet-tabs>
      <status-bar></status-bar>
    `;
  }
}
customElements.define('excel-app', ExcelApp);
</script>
</body>
</html>
